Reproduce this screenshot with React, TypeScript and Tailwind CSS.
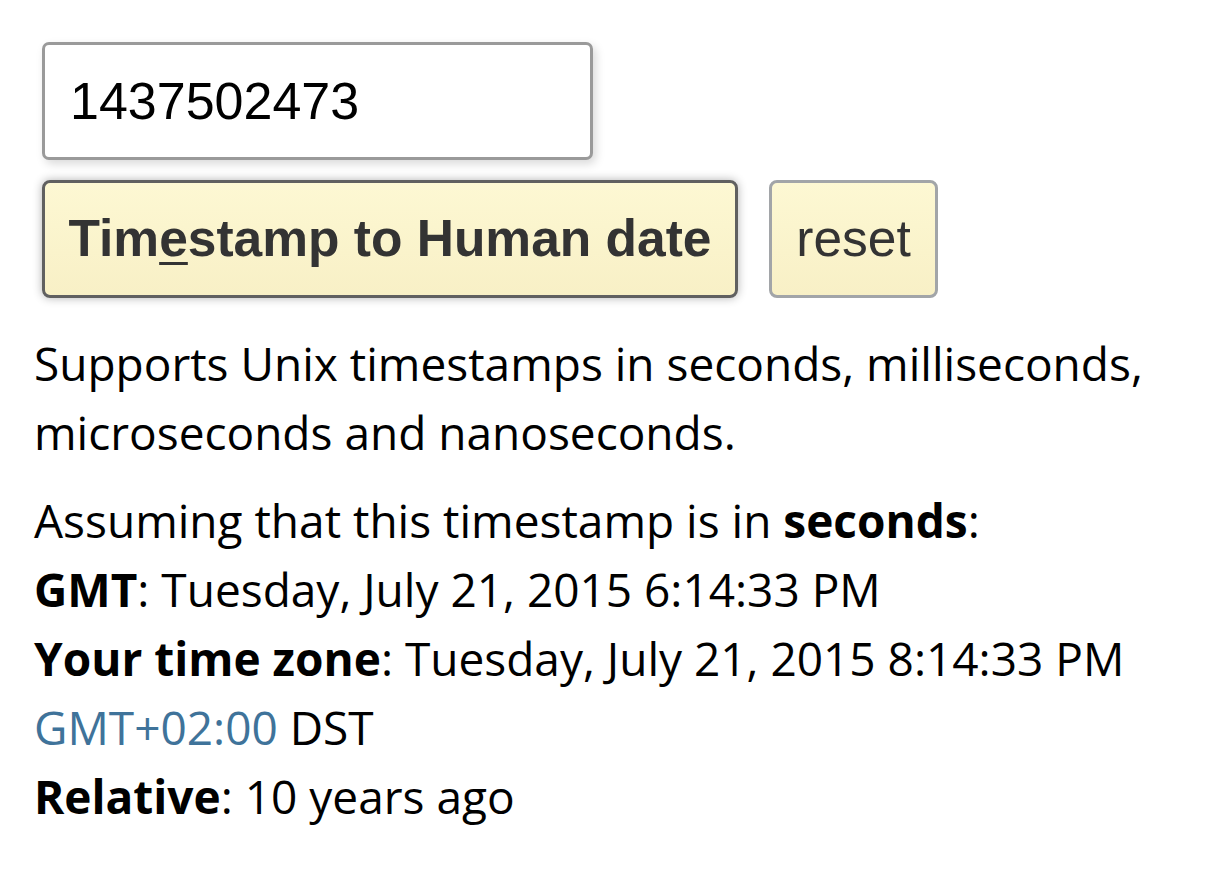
import React from "react";

export default function App() {
  return (
    <div className="min-h-[880px] w-[1206px] bg-white pl-[34px] pt-[42px]">
      <div className="pl-[8px]">
        <input
          readOnly
          value="1437502473"
          className="box-border h-[118px] w-[551px] rounded-[7px] border-[3px] border-[#9a9a9a] bg-white pl-[25px] text-[52px] text-black shadow-[3px_4px_10px_rgba(0,0,0,0.15)] outline-none"
          style={{ fontFamily: '"Liberation Sans", Arial, sans-serif' }}
        />
        <div className="mt-[20px] flex gap-[31px]" style={{ fontFamily: '"Liberation Sans", Arial, sans-serif' }}>
          <button className="box-border h-[118px] w-[696px] rounded-[8px] border-[3px] border-[#606060] bg-gradient-to-b from-[#fdf8d3] to-[#f8f0c6] text-[51.5px] font-bold text-[#333] shadow-[0_0_10px_rgba(0,0,0,0.3)]">
            Tim<span className="underline decoration-[3px] underline-offset-[6px]">e</span>stamp to Human date
          </button>
          <button className="box-border h-[118px] w-[169px] rounded-[8px] border-[3px] border-[#a2a5a8] bg-gradient-to-b from-[#fdf8d3] to-[#f8f0c6] text-[51.5px] text-[#333]">
            reset
          </button>
        </div>
      </div>
      <div className="text-[46px] leading-[69px] text-black" style={{ fontFamily: '"Open Sans", sans-serif' }}>
        <p className="mt-[31px]">
          Supports Unix timestamps in seconds, milliseconds,
          <br />
          microseconds and nanoseconds.
        </p>
        <p className="mt-[19px]">
          Assuming that this timestamp is in <b>seconds</b>:
          <br />
          <b>GMT</b>: Tuesday, July 21, 2015 6:14:33 PM
          <br />
          <b>Your time zone</b>: Tuesday, July 21, 2015 8:14:33 PM
          <br />
          <span className="text-[#3f739a]">GMT+02:00</span> DST
          <br />
          <b>Relative</b>: 10 years ago
        </p>
      </div>
    </div>
  );
}
